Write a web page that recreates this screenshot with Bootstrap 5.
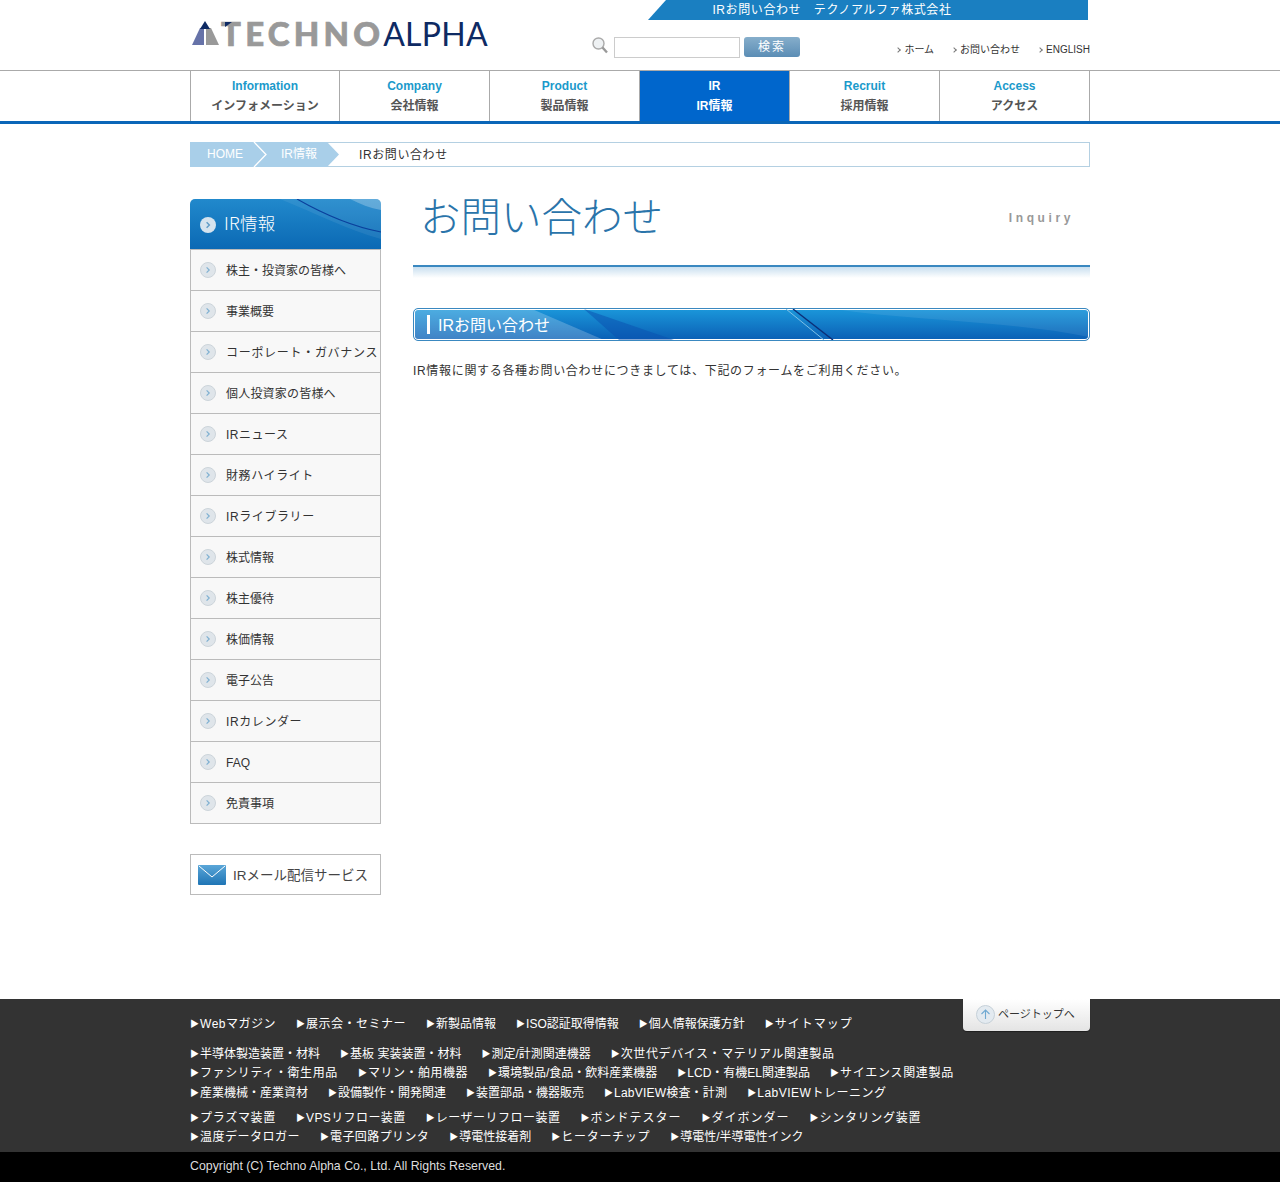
<!DOCTYPE html>
<html lang="ja">
<head>
<meta charset="UTF-8" />
<meta name="viewport" content="width=device-width, initial-scale=1.0" />
<title>IRお問い合わせ テクノアルファ株式会社</title>
<link href="https://cdn.jsdelivr.net/npm/bootstrap@5.3.0/dist/css/bootstrap.min.css" rel="stylesheet">
<style>
body { font-family: "Liberation Sans", "Noto Sans CJK JP", sans-serif; font-size: 12px; line-height: 1.6; color: #333; background: #fff; }
a { color: inherit; text-decoration: none; }
.wrap { width: 900px; margin: 0 auto; position: relative; }
/* the kana in the reference run wider than the kanji, so widen per item */
.s2 { letter-spacing: .2px; }
.s4 { letter-spacing: .4px; }
.s5 { letter-spacing: .5px; }
.s6 { letter-spacing: .6px; }
.s7 { letter-spacing: .7px; }
.s10 { letter-spacing: 1px; }

/* header */
.head-inner { height: 70px; }
.logo { padding: 15px 0 0 2px; font-family: Lato, "Liberation Sans", sans-serif; font-size: 33px; line-height: 36px; white-space: nowrap; }
.logo svg { vertical-align: top; margin-top: 6px; overflow: visible; position: relative; z-index: 1; }
.logo .techno { color: #999; font-weight: 900; letter-spacing: 4.2px; margin-left: 1px; -webkit-text-stroke: .7px #999; }
.logo .alpha { color: #0e2a63; font-weight: 400; font-size: 32px; letter-spacing: .3px; margin-left: -1px; }
.head-right { width: 498px; }
.strip { margin: 0 2px 0 56px; height: 20px; line-height: 20px; background: #1a7fc1; color: #fff; text-align: center; clip-path: polygon(18px 0, 100% 0, 100% 100%, 0 100%); padding-right: 72px; font-size: 12px; letter-spacing: .6px; }
.search-row { margin-top: 17px; }
.search-box { width: 126px; height: 21px; border: 1px solid #ccc; background: #fff; margin: 0 4px 0 6px; padding: 0 3px; }
.search-btn { width: 56px; height: 20px; padding: 0; line-height: 20px; border: 0; border-radius: 3px; color: #fff; font-size: 12px; letter-spacing: 2px; background: linear-gradient(#86aecb, #5b8db5); }
.top-links { font-size: 10px; gap: 18px; padding-top: 3px; color: #333; line-height: 20px; }
.top-links a::before { content: ""; display: inline-block; width: 4px; height: 4px; border-top: 1px solid #777; border-right: 1px solid #777; transform: rotate(45deg); margin: 0 4px 1px 0; }

/* global nav */
.gnav { border-top: 1px solid #aaa; border-bottom: 3px solid #0a66b8; }
.gnav-item { width: 150px; height: 50px; border-left: 1px solid #aaa; text-align: center; font-weight: 700; line-height: 19px; padding-top: 6px; }
.gnav-item:first-child { width: 149px; }
.gnav-item:last-child { width: 151px; border-right: 1px solid #aaa; }
.gnav-item b { display: block; color: #1b9acb; }
.gnav-item span { display: block; color: #555; margin-top: 1px; }
.gnav-item.active { background: #0066cc; }
.gnav-item.active b, .gnav-item.active span { color: #fff; }

/* breadcrumb */
.crumb { margin-top: 18px; height: 25px; border: 1px solid #b4d0e2; line-height: 25px; }
.crumb-trail { width: 149px; margin: -1px 0 -1px -1px; height: 25px; background: #a9cfe9; color: #fff; clip-path: polygon(0 0, 137px 0, 100% 50%, 137px 100%, 0 100%); padding-left: 17px; position: relative; }
.crumb-trail svg { position: absolute; left: 63px; top: 0; }
.crumb-trail .second { position: absolute; left: 91px; }
.crumb-now { margin-left: 20px; letter-spacing: .6px; }

/* sidebar */
.side { width: 191px; margin: 32px 0 104px; }
.side-head { height: 50px; border-radius: 5px 5px 0 0; background: linear-gradient(#2189cc, #0b69b4); color: #fff; position: relative; overflow: hidden; font-size: 17.5px; letter-spacing: .3px; font-weight: 300; font-family: "Noto Sans CJK JP", sans-serif; line-height: 48px; padding-left: 34px; }
.side-head svg.swoosh { position: absolute; left: 0; top: 0; }
.side-head svg.dot { position: absolute; left: 10px; top: 18px; }
.side-head span { position: relative; }
.side-list { border-radius: 0; }
.side-list .list-group-item { height: 41px; padding: 1px 0 0 35px; background: #f8f8f8; border-color: #bbb; color: #333; font-size: 12px; line-height: 41px; position: relative; white-space: nowrap; overflow: hidden; border-radius: 0; }
.side-list .list-group-item:first-child { height: 42px; }
.side-list .list-group-item svg { position: absolute; left: 9px; top: 12px; }
.mail-banner { height: 41px; margin-top: 30px; border: 1px solid #bbb; font-size: 13.5px; gap: 7px; padding-left: 7px; color: #444; }
.mail-banner span { padding-top: 2px; }

/* main */
.main { width: 677px; margin-top: 27px; }
.page-title { height: 71px; padding-left: 7px; }
.page-title h1 { font-size: 40.5px; font-weight: 300; line-height: 36px; margin: 0; padding-top: 3px; color: #2a74aa; font-family: "Noto Sans CJK JP", sans-serif; }
.page-title .en { color: #999; font-weight: 700; font-size: 12px; letter-spacing: 3.6px; padding: 15px 16px 0 0; }
.title-rule { height: 13px; border-top: 2px solid #3a88c0; background: linear-gradient(#c9dfef, #fff); }
.sec-bar { margin-top: 30px; height: 33px; border: 1px solid #3a88c0; border-radius: 5px; box-shadow: inset 0 0 0 1px #fff; background: linear-gradient(#1b97da, #0a5fb5); position: relative; overflow: hidden; color: #fff; }
.sec-bar svg { position: absolute; left: 0; top: 0; }
.sec-bar h2 { position: relative; font-size: 16px; font-weight: 400; line-height: 22px; margin: 6px 0 0 13px; padding-left: 8px; border-left: 3px solid #fff; height: 19px; }
.intro { margin: 20px 0 0; line-height: 21px; letter-spacing: .68px; }

/* footer */
.foot { background: #333; color: #fff; height: 153px; }
.foot-links { padding-top: 16px; line-height: 19.5px; font-size: 12px; }
.foot-links ul { list-style: none; margin: 0; padding: 0; display: flex; gap: 0 20px; }
.foot-links ul.gap-top { margin-top: 5.5px; }
.foot-links ul.gap-big { margin-top: 10px; }
.foot-links li { white-space: nowrap; }
.foot-links li::before { content: "▶"; font-size: 9px; margin-right: 1px; vertical-align: 1px; letter-spacing: 0; }
.page-top { position: absolute; right: 0; top: 0; width: 127px; height: 32px; border-radius: 0 0 4px 4px; background: linear-gradient(#fff, #e4e4e4); box-shadow: 0 1px 1px rgba(0,0,0,.4); color: #333; font-size: 11px; line-height: 31px; padding-left: 35px; }
.page-top svg { position: absolute; left: 13px; top: 6px; }
.copy { height: 30px; background: #000; color: #ddd; line-height: 28px; font-size: 12.35px; }
</style>
</head>
<body>

<!-- shared bullet -->
<svg width="0" height="0" class="d-none">
  <symbol id="bullet" viewBox="0 0 16 16">
    <circle cx="8" cy="8" r="7.5" fill="#dfe5ea" stroke="#ccd4da"/>
    <path d="M6.6 5.4 9.2 8 6.6 10.6" fill="none" stroke="#7fb0d2" stroke-width="1.2"/>
  </symbol>
</svg>

<header>
  <div class="wrap head-inner d-flex justify-content-between">
    <a class="logo" href="#">
      <svg width="28" height="25" viewBox="0 0 28 25">
        <polygon points="0,24 8,7 12,7 12,24" fill="#6672a8"/>
        <polygon points="14,7 19,7 27,24 14,24" fill="#999"/>
        <polygon points="13,0 18,8 8,8" fill="#0e2a63"/>
        <polygon points="33,1 40,1 33,6" fill="#0e2a63"/>
      </svg><span class="techno">TECHNO</span><span class="alpha">ALPHA</span>
    </a>
    <div class="head-right">
      <div class="strip">IRお問い合わせ　テクノアルファ株式会社</div>
      <div class="search-row d-flex align-items-start">
        <svg width="16" height="18" viewBox="0 0 16 18">
          <circle cx="6.5" cy="6.5" r="5.5" fill="#eef1f3" stroke="#aaa" stroke-width="1.4"/>
          <path d="M10.5 10.5 15 15.5" stroke="#999" stroke-width="2.4"/>
        </svg>
        <input class="search-box" type="text" aria-label="検索">
        <button class="search-btn" type="button">検索</button>
        <nav class="top-links d-flex ms-auto">
          <a href="#">ホーム</a>
          <a href="#">お問い合わせ</a>
          <a href="#">ENGLISH</a>
        </nav>
      </div>
    </div>
  </div>
</header>

<nav class="gnav">
  <div class="wrap d-flex">
    <a class="gnav-item" href="#"><b>Information</b><span>インフォメーション</span></a>
    <a class="gnav-item" href="#"><b>Company</b><span>会社情報</span></a>
    <a class="gnav-item" href="#"><b>Product</b><span>製品情報</span></a>
    <a class="gnav-item active" href="#"><b>IR</b><span>IR情報</span></a>
    <a class="gnav-item" href="#"><b>Recruit</b><span>採用情報</span></a>
    <a class="gnav-item" href="#"><b>Access</b><span>アクセス</span></a>
  </div>
</nav>

<div class="wrap">
  <div class="crumb d-flex">
    <div class="crumb-trail">
      <a href="#">HOME</a>
      <svg width="14" height="25" viewBox="0 0 14 25"><path d="M1 0 13 12.5 1 25" fill="none" stroke="#fff" stroke-width="1.3"/></svg>
      <a class="second" href="#">IR情報</a>
    </div>
    <div class="crumb-now">IRお問い合わせ</div>
  </div>

  <div class="d-flex justify-content-between">
    <aside class="side">
      <div class="side-head">
        <svg class="swoosh" width="191" height="50" viewBox="0 0 191 50">
          <path d="M90 0C125 14 160 32 191 40V0Z" fill="#fff" fill-opacity=".07"/>
          <path d="M107 0C135 16 165 28 191 33" fill="none" stroke="#0a3f9c" stroke-width="1.1"/>
          <path d="M160 0C170 5 180 9 191 11V0Z" fill="#fff" fill-opacity=".25"/>
        </svg>
        <svg class="dot" width="16" height="16" viewBox="0 0 16 16"><circle cx="8" cy="8" r="8" fill="#d5e3ee"/><path d="M6.6 5.2 9.4 8 6.6 10.8" fill="none" stroke="#5e9ac6" stroke-width="1.4"/></svg>
        <span>IR情報</span>
      </div>
      <div class="list-group side-list">
        <a class="list-group-item" href="#"><svg width="16" height="16"><use href="#bullet"/></svg>株主・投資家の皆様へ</a>
        <a class="list-group-item" href="#"><svg width="16" height="16"><use href="#bullet"/></svg>事業概要</a>
        <a class="list-group-item s7" href="#"><svg width="16" height="16"><use href="#bullet"/></svg>コーポレート・ガバナンス</a>
        <a class="list-group-item s2" href="#"><svg width="16" height="16"><use href="#bullet"/></svg>個人投資家の皆様へ</a>
        <a class="list-group-item s5" href="#"><svg width="16" height="16"><use href="#bullet"/></svg>IRニュース</a>
        <a class="list-group-item s6" href="#"><svg width="16" height="16"><use href="#bullet"/></svg>財務ハイライト</a>
        <a class="list-group-item s6" href="#"><svg width="16" height="16"><use href="#bullet"/></svg>IRライブラリー</a>
        <a class="list-group-item" href="#"><svg width="16" height="16"><use href="#bullet"/></svg>株式情報</a>
        <a class="list-group-item" href="#"><svg width="16" height="16"><use href="#bullet"/></svg>株主優待</a>
        <a class="list-group-item" href="#"><svg width="16" height="16"><use href="#bullet"/></svg>株価情報</a>
        <a class="list-group-item" href="#"><svg width="16" height="16"><use href="#bullet"/></svg>電子公告</a>
        <a class="list-group-item s6" href="#"><svg width="16" height="16"><use href="#bullet"/></svg>IRカレンダー</a>
        <a class="list-group-item" href="#"><svg width="16" height="16"><use href="#bullet"/></svg>FAQ</a>
        <a class="list-group-item" href="#"><svg width="16" height="16"><use href="#bullet"/></svg>免責事項</a>
      </div>
      <a class="mail-banner d-flex align-items-center" href="#">
        <svg width="28" height="20" viewBox="0 0 28 20">
          <defs><linearGradient id="mailg" x1="0" y1="0" x2="0" y2="1"><stop offset="0" stop-color="#5aa6d8"/><stop offset="1" stop-color="#1f75b5"/></linearGradient></defs>
          <rect width="28" height="20" rx="1" fill="url(#mailg)"/>
          <path d="M1 1 14 12 27 1" fill="none" stroke="#fff" stroke-width="1"/>
        </svg>
        <span>IRメール配信サービス</span>
      </a>
    </aside>

    <main class="main">
      <div class="page-title d-flex justify-content-between">
        <h1>お問い合わせ</h1>
        <div class="en">Inquiry</div>
      </div>
      <div class="title-rule"></div>
      <div class="sec-bar">
        <svg width="675" height="31" viewBox="0 0 675 31" preserveAspectRatio="none">
          <path d="M0 0H118L190 31H0Z" fill="#fff" fill-opacity=".22"/>
          <path d="M170 0 L260 31 H205Z" fill="#0a4fb0" fill-opacity=".5"/>
          <path d="M379 0 L419 31" stroke="#0c2f78" stroke-width="1.4"/>
          <path d="M372 0 L410 31" stroke="#7fc0e6" stroke-width="1"/>
          <path d="M420 0 C500 12 600 12 675 28 V0Z" fill="#fff" fill-opacity=".08"/>
        </svg>
        <h2>IRお問い合わせ</h2>
      </div>
      <p class="intro">IR情報に関する各種お問い合わせにつきましては、下記のフォームをご利用ください。</p>
    </main>
  </div>
</div>

<footer class="foot">
  <div class="wrap">
    <a class="page-top" href="#">
      <svg width="19" height="19" viewBox="0 0 19 19"><circle cx="9.5" cy="9.5" r="9" fill="#e3eaf0" stroke="#c5d0d8"/><path d="M5.5 9 9.5 5 13.5 9M9.5 5V14" fill="none" stroke="#6fa9d2" stroke-width="1.1"/></svg>
      ページトップへ
    </a>
    <div class="foot-links">
      <ul>
        <li class="s5">Webマガジン</li><li class="s5">展示会・セミナー</li><li>新製品情報</li><li>ISO認証取得情報</li><li>個人情報保護方針</li><li class="s10">サイトマップ</li>
      </ul>
      <ul class="gap-big">
        <li>半導体製造装置・材料</li><li>基板 実装装置・材料</li><li>測定/計測関連機器</li><li class="s6">次世代デバイス・マテリアル関連製品</li>
      </ul>
      <ul>
        <li class="s6">ファシリティ・衛生用品</li><li class="s5">マリン・舶用機器</li><li>環境製品/食品・飲料産業機器</li><li>LCD・有機EL関連製品</li><li class="s7">サイエンス関連製品</li>
      </ul>
      <ul>
        <li>産業機械・産業資材</li><li>設備製作・開発関連</li><li>装置部品・機器販売</li><li class="s2">LabVIEW検査・計測</li><li class="s5">LabVIEWトレーニング</li>
      </ul>
      <ul class="gap-top">
        <li class="s7">プラズマ装置</li><li class="s4">VPSリフロー装置</li><li class="s5">レーザーリフロー装置</li><li class="s10">ボンドテスター</li><li class="s10">ダイボンダー</li><li class="s7">シンタリング装置</li>
      </ul>
      <ul>
        <li class="s5">温度データロガー</li><li class="s4">電子回路プリンタ</li><li>導電性接着剤</li><li class="s7">ヒーターチップ</li><li>導電性/半導電性インク</li>
      </ul>
    </div>
  </div>
</footer>
<div class="copy"><div class="wrap">Copyright (C) Techno Alpha Co., Ltd. All Rights Reserved.</div></div>

<script src="https://cdn.jsdelivr.net/npm/bootstrap@5.3.0/dist/js/bootstrap.bundle.min.js"></script>
</body>
</html>
